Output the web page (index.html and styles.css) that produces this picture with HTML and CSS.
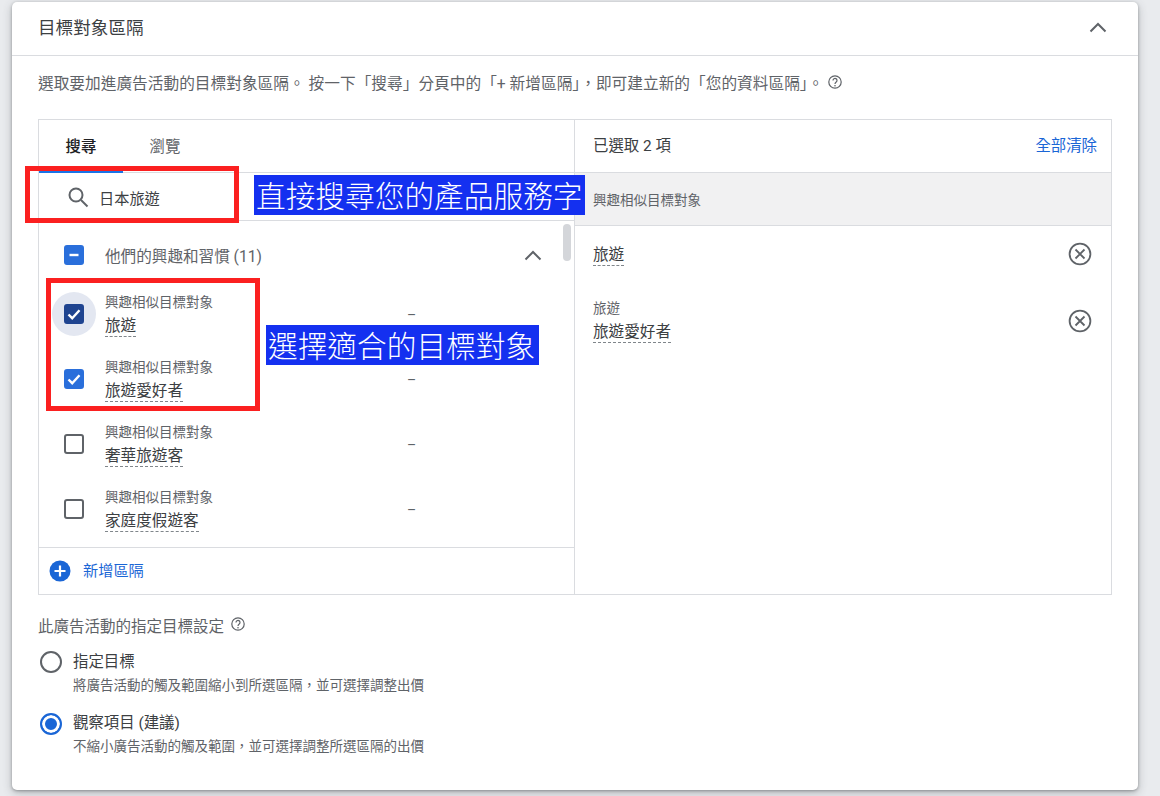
FILE: index.html
```html
<!DOCTYPE html>
<html lang="zh-Hant">
<head>
<meta charset="utf-8">
<title>目標對象區隔</title>
<link rel="stylesheet" href="styles.css">
</head>
<body>
<main class="card">
  <header class="card-head">
    <h1 class="card-title">目標對象區隔</h1>
    <svg class="chev" viewBox="0 0 24 24"><path d="M4.5 16.500 12 9l7.500 7.500"/></svg>
  </header>
  <div class="card-body">
    <p class="desc">選取要加進廣告活動的目標對象區隔。 按一下「搜尋」分頁中的「+ 新增區隔」，即可建立新的「您的資料區隔」。<svg class="help" viewBox="0 0 16 16"><circle cx="8" cy="8" r="6.200"/><path d="M6 6.400a2 2 0 1 1 3.200 1.600c-.8.600-1.200 1-1.200 1.900"/><circle class="dot" cx="8" cy="11.700" r=".8"/></svg></p>

    <section class="panel">
      <div class="left">
        <nav class="tabs">
          <span class="tab tab-active">搜尋</span>
          <span class="tab">瀏覽</span>
        </nav>
        <div class="search">
          <svg class="search-icon" viewBox="0 0 24 24"><circle cx="10" cy="10" r="6.500"/><path d="m15 15 6.500 6.500"/></svg>
          <span>日本旅遊</span>
        </div>
        <div class="list">
          <div class="group">
            <span class="box box-minus"><svg viewBox="0 0 20 20"><path d="M5.500 10h9"/></svg></span>
            <span class="group-name">他們的興趣和習慣 (11)</span>
            <svg class="chev chev-sm" viewBox="0 0 24 24"><path d="M4.500 16.500 12 9l7.500 7.500"/></svg>
          </div>
          <div class="row">
            <span class="halo"><span class="box box-dark"><svg viewBox="0 0 20 20"><path d="m4.500 10.500 3.700 3.700 7.300-8"/></svg></span></span>
            <div class="row-text"><small>興趣相似目標對象</small><b>旅遊</b></div>
            <span class="dash">–</span>
          </div>
          <div class="row">
            <span class="halo-none"><span class="box box-on"><svg viewBox="0 0 20 20"><path d="m4.500 10.500 3.700 3.700 7.300-8"/></svg></span></span>
            <div class="row-text"><small>興趣相似目標對象</small><b>旅遊愛好者</b></div>
            <span class="dash">–</span>
          </div>
          <div class="row">
            <span class="halo-none"><span class="box"></span></span>
            <div class="row-text"><small>興趣相似目標對象</small><b>奢華旅遊客</b></div>
            <span class="dash">–</span>
          </div>
          <div class="row">
            <span class="halo-none"><span class="box"></span></span>
            <div class="row-text"><small>興趣相似目標對象</small><b>家庭度假遊客</b></div>
            <span class="dash">–</span>
          </div>
          <span class="scrollbar"></span>
        </div>
        <div class="add">
          <svg class="plus" viewBox="0 0 22 22"><circle cx="11" cy="11" r="10.500"/><path d="M11 5.500v11M5.500 11h11"/></svg>
          <span>新增區隔</span>
        </div>
      </div>
      <div class="right">
        <div class="right-head"><span>已選取 2 項</span><a class="clear">全部清除</a></div>
        <div class="right-group">興趣相似目標對象</div>
        <div class="sel sel-one">
          <b>旅遊</b>
          <svg class="remove" viewBox="0 0 24 24"><circle cx="12" cy="12" r="10.400"/><path d="m7.500 7.500 9 9M16.500 7.500l-9 9"/></svg>
        </div>
        <div class="sel sel-two">
          <div class="row-text"><small>旅遊</small><b>旅遊愛好者</b></div>
          <svg class="remove" viewBox="0 0 24 24"><circle cx="12" cy="12" r="10.400"/><path d="m7.500 7.500 9 9M16.500 7.500l-9 9"/></svg>
        </div>
      </div>
    </section>

    <section class="settings">
      <div class="settings-title">此廣告活動的指定目標設定<svg class="help" viewBox="0 0 16 16"><circle cx="8" cy="8" r="6.200"/><path d="M6 6.400a2 2 0 1 1 3.200 1.600c-.8.600-1.200 1-1.200 1.900"/><circle class="dot" cx="8" cy="11.700" r=".8"/></svg></div>
      <div class="option">
        <span class="radio"></span>
        <div class="opt-text"><div class="opt-name">指定目標</div><div class="opt-desc">將廣告活動的觸及範圍縮小到所選區隔，並可選擇調整出價</div></div>
      </div>
      <div class="option">
        <span class="radio radio-on"></span>
        <div><div class="opt-name">觀察項目 (建議)</div><div class="opt-desc">不縮小廣告活動的觸及範圍，並可選擇調整所選區隔的出價</div></div>
      </div>
    </section>
  </div>
</main>

<div class="mark mark-search"></div>
<div class="mark mark-list"></div>
<div class="note note-search">直接搜尋您的產品服務字</div>
<div class="note note-list">選擇適合的目標對象</div>
</body>
</html>
```
FILE: styles.css
```css
* { box-sizing: border-box; }
html, body { margin: 0; height: 796px; overflow: hidden; }
body {
  background: #e9ebee;
  font-family: Roboto, "Noto Sans CJK TC", sans-serif;
  color: #3c4043;
  padding: 2px 22px 0 12px;
  position: relative;
}
svg { display: block; fill: none; }
.card {
  width: 1126px;
  height: 788px;
  background: #fff;
  border-radius: 5px;
  box-shadow: 0 1px 3px rgba(60,64,67,.4), 0 3px 10px rgba(60,64,67,.3);
}
.card-head {
  height: 54px;
  border-bottom: 1px solid #dadce0;
  display: flex;
  align-items: center;
  justify-content: space-between;
  padding: 0 26px 4px;
}
.card-title { margin: 0; font-size: 17.6px; font-weight: 400; color: #3c4043; }
.chev { width: 24px; height: 24px; margin-right: 2px; }
.chev path { stroke: #5f6368; stroke-width: 2; }
.card-body { padding: 0 26px; }
.desc {
  margin: 0;
  height: 63px;
  padding-top: 16px;
  font-size: 15.7px;
  line-height: 24px;
  color: #5f6368;
  display: flex;
  align-items: flex-start;
}
.help { width: 16px; height: 16px; margin: 2px 0 0 4px; flex: none; }
.help circle, .help path { stroke: #5f6368; stroke-width: 1.200; }
.help .dot { fill: #5f6368; stroke: none; }

.panel {
  width: 1074px;
  height: 476px;
  border: 1px solid #dadce0;
  display: flex;
}
.left { width: 536px; border-right: 1px solid #dadce0; display: flex; flex-direction: column; }
.right { flex: 1; min-width: 0; }

.tabs { height: 53px; display: flex; border-bottom: 1px solid #dadce0; flex: none; }
.tab {
  width: 84px;
  font-size: 15.4px;
  display: flex;
  align-items: center;
  justify-content: center;
  color: #5f6368;
  padding-bottom: 3px;
}
.tab-active { color: #202124; font-weight: 500; box-shadow: 0 1px 0 #1a73e8, inset 0 -1px 0 #1a73e8; }
.search {
  height: 48px;
  flex: none;
  display: flex;
  align-items: center;
  padding-left: 27px;
  font-size: 15.2px;
  color: #3c4043;
  border-bottom: 1px solid #dadce0;
}
.search-icon { width: 24px; height: 24px; margin-right: 9px; }
.search-icon circle, .search-icon path { stroke: #5f6368; stroke-width: 2; }
.list { flex: 1; min-height: 0; position: relative; overflow: hidden; }
.group {
  height: 64px;
  margin-bottom: -4px;
  display: flex;
  align-items: center;
  padding: 4px 0 0 25px;
  font-size: 15.6px;
  color: #5f6368;
}
.group-name { margin-left: 21px; flex: 1; }
.chev-sm { margin: 0 29px 0 0; }
.box {
  width: 20px;
  height: 20px;
  border: 2px solid #5f6368;
  border-radius: 3px;
  display: block;
  flex: none;
  background: #fff;
}
.box svg { width: 20px; height: 20px; margin: -2px; }
.box path { stroke: #fff; stroke-width: 2.400; }
.box-minus, .box-on { background: #2a6fdb; border-color: #2a6fdb; }
.box-dark { background: #1f4490; border-color: #1f4490; }
.row { height: 65px; display: flex; align-items: center; position: relative; }
.halo, .halo-none {
  width: 44px;
  height: 44px;
  margin-left: 13px;
  border-radius: 50%;
  display: flex;
  align-items: center;
  justify-content: center;
  flex: none;
}
.halo { background: #e3e7f1; }
.row-text { margin: 4px 0 0 9px; display: flex; flex-direction: column; align-items: flex-start; }
.row-text small { font-size: 13.5px; line-height: 16px; color: #5f6368; margin-bottom: 7px; }
b {
  font-weight: 400;
  font-size: 15.6px;
  line-height: 19px;
  color: #3c4043;
  border-bottom: 1px dashed #80868b;
}
.dash { position: absolute; left: 368px; top: 26px; font-size: 14px; color: #5f6368; }
.scrollbar {
  position: absolute;
  right: 3px;
  top: 3px;
  width: 8px;
  height: 37px;
  border-radius: 4px;
  background: #d4d6da;
}
.add {
  height: 47px;
  flex: none;
  border-top: 1px solid #dadce0;
  display: flex;
  align-items: center;
  padding: 0 0 4px 10px;
  font-size: 15.2px;
  color: #1a66d6;
}
.plus { width: 22px; height: 22px; margin: 4px 12px 0 0; }
.plus circle { fill: #1a66d6; }
.plus path { stroke: #fff; stroke-width: 2.200; }

.right-head {
  height: 53px;
  border-bottom: 1px solid #dadce0;
  display: flex;
  align-items: center;
  justify-content: space-between;
  padding: 0 14px 4px 18px;
  font-size: 15.4px;
  color: #3c4043;
}
.clear { color: #1a66d6; }
.right-group {
  height: 53px;
  background: #f1f1f2;
  border-bottom: 1px solid #dadce0;
  display: flex;
  align-items: center;
  padding-left: 18px;
  font-size: 13.5px;
  color: #5f6368;
}
.sel { display: flex; align-items: center; justify-content: space-between; padding: 0 20px 0 18px; }
.sel-one { height: 57px; padding-bottom: 1px; }
.sel-one b { margin-top: 3px; }
.sel-one .remove { margin-top: -1px; }
.sel-two { height: 70px; padding-top: 6px; }
.sel-two .row-text { margin: 1px 0 0; }
.remove { width: 24px; height: 24px; margin-right: -1px; }
.remove circle, .remove path { stroke: #5f6368; stroke-width: 1.800; }

.settings { padding-top: 20px; }
.settings-title { display: flex; font-size: 15.5px; line-height: 24px; color: #5f6368; height: 34px; }
.settings-title .help { margin: 1px 0 0 6px; }
.option { display: flex; gap: 11px; height: 62px; }
.opt-text { padding-top: 1px; }
.radio {
  width: 22px;
  height: 22px;
  border: 2px solid #5f6368;
  border-radius: 50%;
  margin: 2px 0 0 2px;
  flex: none;
}
.radio-on { border-color: #1a66d6; background: #1a66d6; box-shadow: inset 0 0 0 3px #fff; }
.opt-name { font-size: 15.4px; line-height: 24px; color: #3c4043; }
.opt-desc { font-size: 13.5px; line-height: 22px; color: #5f6368; }

.mark { position: absolute; border: 5px solid #fb2020; }
.mark-search { left: 25px; top: 166px; width: 214px; height: 57px; }
.mark-list { left: 46px; top: 278px; width: 214px; height: 133px; }
.note {
  position: absolute;
  background: #1430f0;
  color: #fff;
  height: 40px;
  line-height: 40px;
  font-size: 29.7px;
  font-weight: 300;
  font-family: "Noto Sans CJK TC", sans-serif;
  white-space: nowrap;
}
.note-search { left: 254px; top: 175px; width: 331px; padding-left: 2px; }
.note-list { left: 266px; top: 325px; width: 273px; padding-left: 2px; }
```
